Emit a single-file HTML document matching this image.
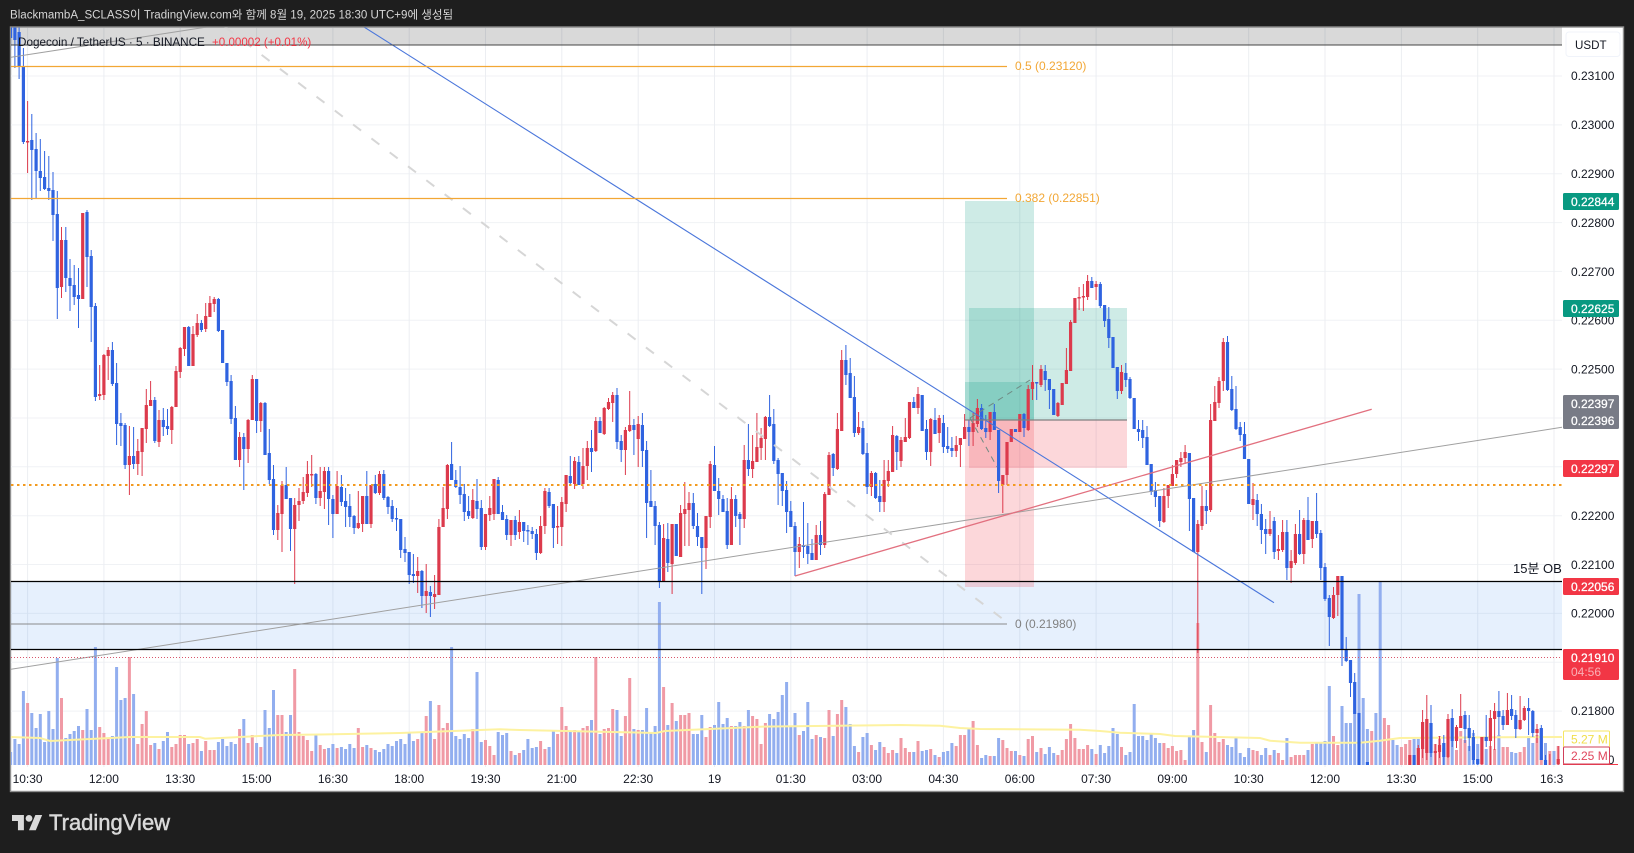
<!DOCTYPE html>
<html lang="ko"><head><meta charset="utf-8"><title>Dogecoin / TetherUS chart</title>
<style>
html,body{margin:0;padding:0;background:#1e1e1e;width:1634px;height:853px;overflow:hidden}
svg{display:block;font-family:"Liberation Sans","Noto Sans CJK KR",sans-serif}
.p{font-size:12px;fill:#131722}
.t{font-size:12px;fill:#131722;text-anchor:middle}
.w{font-size:12px;fill:#fff;stroke:#fff;stroke-width:.25}
path{fill:none}
</style></head><body>
<svg width="1634" height="853" viewBox="0 0 1634 853" xmlns="http://www.w3.org/2000/svg">
<defs><clipPath id="c"><rect x="11" y="27.5" width="1551" height="738"/></clipPath></defs>
<rect width="1634" height="853" fill="#1e1e1e"/>
<text x="10" y="18.5" font-size="11.55" fill="#d6d6d6">BlackmambA_SCLASS이 TradingView.com와 함께 8월 19, 2025 18:30 UTC+9에 생성됨</text>
<rect x="10.5" y="27" width="1613" height="764.5" fill="#fff" stroke="#8f8f8f" stroke-width="1.4"/>
<!-- grid -->
<path stroke="#f0f2f5" d="M11 76H1562M11 124.9H1562M11 173.7H1562M11 222.6H1562M11 271.4H1562M11 320.3H1562M11 369.1H1562M11 418H1562M11 466.8H1562M11 515.7H1562M11 564.5H1562M11 613.4H1562M11 662.2H1562M11 711.1H1562"/>
<path stroke="#eceef2" d="M27.6 28V767M103.9 28V767M180.2 28V767M256.6 28V767M332.9 28V767M409.2 28V767M485.5 28V767M561.8 28V767M638.2 28V767M714.5 28V767M790.8 28V767M867.1 28V767M943.4 28V767M1019.8 28V767M1096.1 28V767M1172.4 28V767M1248.7 28V767M1325 28V767M1401.4 28V767M1477.7 28V767M1554 28V767"/>
<!-- zones -->
<rect x="11" y="27.5" width="1551" height="17.5" fill="#000" fill-opacity=".15"/>
<rect x="11" y="581.5" width="1551" height="68" fill="#2f86f0" fill-opacity=".12"/>
<rect x="965" y="201" width="69" height="219" fill="#089981" fill-opacity=".2"/>
<rect x="965" y="420" width="69" height="167" fill="#f23645" fill-opacity=".2"/>
<rect x="969" y="308" width="158" height="112" fill="#089981" fill-opacity=".2"/>
<rect x="969" y="420" width="158" height="48" fill="#f23645" fill-opacity=".2"/>
<rect x="965" y="382" width="69" height="38" fill="#089981" fill-opacity=".2"/>
<g clip-path="url(#c)">
<!-- volume blue -->
<path stroke="#92aeef" stroke-width="3" d="M10.6 752V765M14.9 739V765M19.1 744V765M23.4 691V765M31.8 713V765M36.1 728V765M40.3 714V765M44.6 742V765M48.8 711V765M53 729V765M57.3 658V765M65.8 738V765M70 734V765M74.2 731V765M78.5 726V765M87 709V765M91.2 730V765M95.4 647V765M112.4 736V765M116.6 667V765M120.9 700V765M125.1 698V765M133.6 694V765M154.8 743V765M163.3 741V765M167.5 732V765M188.7 744V765M201.4 751V765M218.4 742V765M222.6 739V765M226.9 746V765M231.1 742V765M235.4 744V765M243.8 719V765M256.6 743V765M265 710V765M269.3 728V765M273.5 690V765M286.2 732V765M290.5 715V765M315.9 735V765M328.6 748V765M332.9 744V765M341.4 747V765M345.6 749V765M349.8 744V765M354.1 748V765M366.8 745V765M375.3 750V765M379.5 752V765M383.8 749V765M388 744V765M392.2 746V765M396.5 741V765M400.7 739V765M405 744V765M409.2 732V765M413.4 741V765M422 732V765M430.4 701V765M451.6 647V765M455.8 736V765M460 739V765M464.3 734V765M468.6 738V765M477 672V765M481.3 742V765M498.2 732V765M502.5 735V765M506.7 733V765M515.2 755V765M523.7 750V765M527.9 739V765M532.2 748V765M536.4 747V765M549.1 747V765M553.4 730V765M570.3 731V765M578.8 732V765M591.5 720V765M600 734V765M617 710V765M621.2 736V765M633.9 729V765M642.4 730V765M646.6 708V765M650.9 732V765M655.1 726V765M659.4 602V765M667.8 725V765M676.3 721V765M693.3 734V765M697.5 734V765M701.8 715V765M714.5 725V765M718.7 702V765M723 724V765M727.2 718V765M735.7 726V765M739.9 722V765M748.4 710V765M769.6 714V765M773.8 719V765M778.1 712V765M782.3 695V765M786.6 682V765M790.8 726V765M795 713V765M803.5 731V765M807.8 702V765M812 739V765M820.5 737V765M833.2 736V765M845.9 707V765M850.2 724V765M854.4 746V765M862.9 737V765M867.1 733V765M875.6 750V765M879.8 742V765M896.8 753V765M913.8 752V765M922.2 751V765M926.5 750V765M935 755V765M943.4 752V765M947.7 751V765M951.9 743V765M968.9 729V765M981.6 758V765M985.8 755V765M994.3 756V765M998.6 738V765M1015.5 751V765M1024 756V765M1036.7 752V765M1045.2 754V765M1049.4 747V765M1053.7 753V765M1091.8 749V765M1100.3 745V765M1104.6 753V765M1108.8 746V765M1113 728V765M1117.3 734V765M1125.8 755V765M1130 752V765M1134.2 704V765M1138.5 736V765M1142.7 736V765M1147 740V765M1151.2 733V765M1155.4 738V765M1159.7 743V765M1189.4 737V765M1193.6 730V765M1206.3 752V765M1227.5 745V765M1231.8 747V765M1236 738V765M1240.2 753V765M1244.5 757V765M1248.7 748V765M1261.4 755V765M1265.7 748V765M1274.2 750V765M1286.9 738V765M1308 750V765M1316.6 743V765M1320.8 743V765M1325 741V765M1329.3 686V765M1342 706V765M1346.2 723V765M1350.5 723V765M1354.7 714V765M1359 594V765M1363.2 698V765M1367.4 729V765M1375.9 713V765M1380.2 582V765M1392.9 740V765M1397.1 745V765M1414.1 739V765M1418.3 739V765M1431 743V765M1443.8 748V765M1452.2 741V765M1469.2 746V765M1473.4 733V765M1477.7 744V765M1486.2 749V765M1498.9 735V765M1511.6 752V765M1515.8 753V765M1528.6 736V765M1532.8 743V765M1545.5 743V765M1554 751V765"/>
<!-- volume red -->
<path stroke="#f09aa5" stroke-width="3" d="M27.6 703V765M61.5 698V765M82.7 730V765M99.7 727V765M103.9 733V765M108.2 739V765M129.4 657V765M137.8 744V765M142.1 724V765M146.3 711V765M150.6 745V765M159 749V765M171.8 747V765M176 744V765M180.2 735V765M184.5 735V765M193 743V765M197.2 739V765M205.7 741V765M209.9 750V765M214.2 750V765M239.6 729V765M248.1 743V765M252.3 735V765M260.8 747V765M277.8 715V765M282 715V765M294.7 669V765M299 732V765M303.2 736V765M307.4 740V765M311.7 751V765M320.2 745V765M324.4 749V765M337.1 748V765M358.3 728V765M362.6 747V765M371 748V765M417.7 739V765M426.2 716V765M434.6 739V765M438.9 705V765M443.1 728V765M447.4 723V765M472.8 729V765M485.5 740V765M489.8 746V765M494 755V765M511 751V765M519.4 753V765M540.6 741V765M544.9 749V765M557.6 734V765M561.8 707V765M566.1 726V765M574.6 730V765M583 728V765M587.3 726V765M595.8 657V765M604.2 729V765M608.5 728V765M612.7 709V765M625.4 716V765M629.7 678V765M638.2 730V765M663.6 687V765M672.1 703V765M680.6 715V765M684.8 715V765M689 713V765M706 737V765M710.2 727V765M731.4 726V765M744.2 726V765M752.6 716V765M756.9 719V765M761.1 744V765M765.4 723V765M799.3 735V765M816.2 735V765M824.7 738V765M829 710V765M837.4 714V765M841.7 700V765M858.6 752V765M871.4 745V765M884.1 747V765M888.3 753V765M892.6 750V765M901 738V765M905.3 748V765M909.5 752V765M918 741V765M930.7 749V765M939.2 757V765M956.2 746V765M960.4 735V765M964.6 735V765M973.1 721V765M977.4 745V765M990.1 756V765M1002.8 740V765M1007 748V765M1011.3 751V765M1019.8 755V765M1028.2 739V765M1032.5 736V765M1041 748V765M1057.9 755V765M1062.2 750V765M1066.4 739V765M1070.6 724V765M1074.9 738V765M1079.1 749V765M1083.4 749V765M1087.6 745V765M1096.1 754V765M1121.5 747V765M1163.9 743V765M1168.2 748V765M1172.4 746V765M1176.6 751V765M1180.9 750V765M1185.1 760V765M1197.8 623V765M1202 742V765M1210.6 705V765M1214.8 733V765M1219 742V765M1223.3 739V765M1253 750V765M1257.2 751V765M1270 755V765M1278.4 753V765M1282.6 760V765M1291.1 757V765M1295.4 755V765M1299.6 755V765M1303.8 755V765M1312.3 744V765M1333.5 736V765M1337.8 745V765M1371.7 731V765M1384.4 718V765M1388.6 725V765M1401.4 747V765M1405.6 744V765M1409.8 740V765M1422.6 740V765M1426.8 719V765M1435.3 744V765M1439.5 736V765M1448 737V765M1456.5 750V765M1460.7 731V765M1465 740V765M1481.9 737V765M1490.4 746V765M1494.6 749V765M1503.1 747V765M1507.4 747V765M1520.1 752V765M1524.3 747V765M1537 735V765M1541.3 729V765M1549.8 751V765M1558.2 746V765"/>
<!-- vol MA -->
<path stroke="#fdf2a0" stroke-width="2" d="M11 737L40 738L50 741L130 737L200 737L205 738.7L280 735L320 734.5L400 733L500 729.3L520 730L600 731.7L656 733L665 731L760 726.7L900 725L940 725.7L960 728L980 729L1080 729.7L1100 731L1120 732.7L1160 734L1175 736L1260 738L1270 740.7L1300 742.7L1360 742.7L1380 740.7L1400 738L1500 737.3L1562 737"/>
<!-- wicks blue -->
<path stroke="#2f63e0" stroke-width="1" d="M10.6 27V50M14.9 27V68M19.1 27V79M23.4 48V144M31.8 114V200M36.1 133V199M40.3 139V191M44.6 151V190M48.8 156V200M53 172V241M57.3 191V319M65.8 227V292M70 259V311M74.2 265V305M78.5 268V328M87 210V287M91.2 250V342M95.4 303V401M112.4 342V386M116.6 363V445M120.9 413V446M125.1 423V469M133.6 427V469M154.8 397V443M163.3 408V436M167.5 409V435M188.7 326V366M201.4 320V332M218.4 298V332M222.6 330V363M226.9 363V386M231.1 375V424M235.4 406V460M243.8 433V490M256.6 379V433M265 402V455M269.3 429V484M273.5 465V535M286.2 467V499M290.5 498V551M315.9 473V504M328.6 467V525M332.9 495V538M341.4 475V506M345.6 488V527M349.8 494V527M354.1 515V534M366.8 471V524M375.3 475V494M383.8 470V500M388 496V514M392.2 500V522M396.5 508V531M400.7 519V558M405 537V562M409.2 552V584M413.4 554V583M421.9 570V608M430.4 586V617M451.6 442V480M455.8 470V488M460.1 466V504M464.3 484V521M468.6 496V519M477 479V519M481.3 500V550M498.2 477V514M502.5 505V520M506.7 515V540M515.2 516V540M523.7 522V542M527.9 525V545M532.2 527V539M536.4 529V560M549.1 488V508M553.4 504V548M570.3 456V484M578.8 456V485M591.5 430V472M600 417V433M617 388V449M621.2 435V462M633.9 419V455M642.4 413V467M646.6 441V538M650.9 470V507M655.1 501V545M659.4 522V588M667.8 523V572M676.3 524V556M693.3 493V529M697.5 513V546M701.8 537V594M714.5 446V491M718.7 478V515M723 495V512M727.2 498V549M735.7 495V527M739.9 512V545M748.4 424V476M769.6 395V427M773.8 409V464M778.1 458V505M782.3 473V506M786.6 481V533M790.8 501V527M795 522V576M803.5 502V558M807.8 523V564M812 539V560M820.5 521V555M833.2 453V476M845.9 345V385M850.2 358V398M854.4 376V437M862.9 421V455M867.1 443V494M875.6 472V499M879.8 480V512M896.8 435V470M913.8 397V408M922.2 395V431M926.5 420V460M935 408V434M943.4 415V453M947.7 427V453M951.9 437V457M968.9 420V446M981.6 404V430M985.8 415V438M994.3 404V430M998.6 430V493M1015.5 429V432M1024 413V437M1036.7 382V400M1045.2 365V391M1049.4 379V409M1053.7 389V415M1091.8 277V288M1100.3 282V308M1104.6 305V327M1108.8 307V348M1113 337V368M1117.3 367V399M1125.8 363V387M1130 377V399M1134.2 398V429M1138.5 420V441M1142.7 420V448M1147 426V465M1151.2 464V495M1155.4 482V507M1159.7 496V527M1189.4 453V531M1193.6 498V552M1206.3 490V524M1227.5 336V391M1231.8 376V411M1236 386V430M1240.2 422V441M1244.5 422V459M1248.7 459V504M1257.2 494V526M1261.4 504V544M1265.7 519V554M1274.2 517V559M1286.9 520V580M1299.6 510V555M1308 497V540M1316.6 493V538M1320.8 530V580M1325 563V601M1329.3 595V646M1342 576V666M1346.2 637V662M1350.5 660V697M1354.7 673V714M1359 713V765M1367.4 762V765M1414.1 755V765M1431 705V757M1443.8 735V765M1452.2 709V747M1465 711V743M1469.2 715V751M1473.4 730V764M1477.7 759V765M1486.2 715V747M1498.9 691V735M1503.1 710V730M1511.6 695V720M1515.8 710V738M1528.6 698V735M1532.8 710V737M1541.3 725V760M1545.5 755V765"/>
<!-- bodies blue -->
<path stroke="#2f63e0" stroke-width="3.2" d="M10.6 27V38M14.9 27V40M19.1 32V67M23.4 67V142M31.8 140V150M36.1 149V171M40.3 171V178M44.6 177V189M48.8 188V191M53 190V215M57.3 214V288M65.8 240V278M70 278V286M74.2 285V297M78.5 295V299M87 212V257M91.2 256V307M95.4 306V397M112.4 350V384M116.6 383V424M120.9 423V426M125.1 425V465M133.6 456V464M154.8 400V441M163.3 420V427M167.5 426V429M188.7 327V366M201.4 323V330M218.4 299V331M222.6 330V363M226.9 363V382M231.1 381V419M235.4 418V460M243.8 437V449M256.6 379V421M265 403V455M269.3 453V480M273.5 479V530M286.2 485V499M290.5 498V529M315.9 474V498M328.6 471V499M332.9 499V514M341.4 487V502M345.6 501V507M349.8 506V517M354.1 516V528M366.8 496V524M375.3 484V493M383.8 474V498M388 497V507M392.2 506V519M396.5 518V519.5M400.7 519V550M405 549V553M409.2 552V575M413.4 574V576M421.9 571V596M430.4 592V596M451.6 464V480M455.8 480V487M460.1 487V495M464.3 494V512M468.6 511V516M477 501V509M481.3 508V547M498.2 480V514M502.5 512V520M506.7 519V535M515.2 520V535M523.7 522V531M527.9 530V531.5M532.2 531V534M536.4 534V553M549.1 492V506M553.4 504V528M570.3 476V483M578.8 462V485M591.5 448V452M600 421V433M617 395V442M621.2 441V450M633.9 425V430M642.4 425V451M646.6 450V503M650.9 501V507M655.1 506V526M659.4 525V582M667.8 539V563M676.3 524V556M693.3 503V526M697.5 526V537M701.8 537V548M714.5 465V491M718.7 491V499M723 499V512M727.2 511V545M735.7 499V516M739.9 514V519M748.4 460V469M769.6 417V426M773.8 424V461M778.1 460V474M782.3 473V491M786.6 490V512M790.8 511V527M795 526V552M803.5 545V547M807.8 546V554M812 553V560M820.5 535V545M833.2 454V468M845.9 360V375M850.2 373V398M854.4 397V433M862.9 428V454M867.1 453V487M875.6 473V498M879.8 496V502M896.8 436V452M913.8 402V408M922.2 395V431M926.5 429V452M935 420V434M943.4 423V447M947.7 446V449M951.9 448V451M968.9 427V432M981.6 408V429M985.8 428V432M994.3 412V430M998.6 430V481M1015.5 429V432M1024 414V428M1036.7 382V383.5M1045.2 371V380M1049.4 379V390M1053.7 389V415M1091.8 281V288M1100.3 284V306M1104.6 305V321M1108.8 319V338M1113 337V368M1117.3 367V391M1125.8 373V380M1130 379V398M1134.2 398V429M1138.5 429V432M1142.7 430V438M1147 437V465M1151.2 464V492M1155.4 490V497M1159.7 496V521M1189.4 453V499M1193.6 498V552M1206.3 506V511M1227.5 342V390M1231.8 389V410M1236 409V429M1240.2 427V435M1244.5 434V459M1248.7 459V504M1257.2 500V514M1261.4 514V530M1265.7 529V534M1274.2 521V552M1286.9 532V568M1299.6 534V554M1308 520V540M1316.6 521V534M1320.8 533V568M1325 567V599M1329.3 598V617M1342 576V650M1346.2 649V661M1350.5 660V683M1354.7 682V714M1359 713V765M1367.4 762V765M1414.1 755V765M1431 723V753M1443.8 743V757M1452.2 718V741M1465 715V729M1469.2 728V738M1473.4 737V760M1477.7 759V764M1486.2 737V741M1498.9 711V717M1503.1 716V725M1511.6 709V716M1515.8 715V729M1528.6 708V711M1532.8 711V733M1541.3 728V760M1545.5 760V765"/>
<!-- wicks red -->
<path stroke="#dc3a4c" stroke-width="1" d="M27.6 101V173M61.5 227V298M82.7 213V299M99.7 365V400M103.9 354V400M108.2 347V380M129.4 426V495M137.8 439V475M142.1 428V476M146.3 389V443M150.6 381V406M159 410V447M171.8 406V444M176 366V407M180.2 347V378M184.5 327V356M193 326V366M197.2 314V337M205.7 303V332M209.9 296V317M214.2 297V312M239.6 432V467M248.1 419V463M252.3 375V420M260.8 402V432M277.8 505V540M282 481V552M294.7 498V584M299 488V521M303.2 477V504M307.4 461V497M311.7 455V487M320.2 467V506M324.4 467V509M337.1 471V514M358.3 491V529M362.6 496V532M371 485V528M379.5 471V495M417.7 557V593M426.2 564V613M434.6 575V609M438.9 519V595M443.1 487V527M447.4 464V519M472.8 489V519M485.5 514V550M489.8 496V521M494 479V520M511 520V546M519.4 510V539M540.6 516V554M544.9 488V534M557.6 506V544M561.8 497V546M566.1 475V512M574.6 457V489M583 448V489M587.3 441V480M595.8 417V452M604.2 407V435M608.5 398V410M612.7 392V422M625.4 427V475M629.7 391V432M638.2 416V467M663.6 524V582M672.1 524V594M680.6 505V557M684.8 482V546M689 492V546M706 516V569M710.2 461V528M731.4 487V545M744.2 445V528M752.6 435V478M756.9 413V462M761.1 428V460M765.4 416V460M799.3 537V568M816.2 525V560M824.7 492V548M829 452V495M837.4 413V470M841.7 350V431M858.6 412V435M871.4 471V496M884.1 460V512M888.3 460V487M892.6 426V472M901 437V467M905.3 418V442M909.5 402V439M918 387V414M930.7 418V466M939.2 415V443M956.2 436V457M960.4 438V467M964.6 414V439M973.1 413V446M977.4 399V427M990.1 412V440M1002.8 475V513M1007 442V485M1011.3 429V442M1019.8 414V432M1028.2 385V431M1032.5 365V400M1041 365V387M1057.9 402V417M1062.2 383V405M1066.4 348V384M1070.6 320V371M1074.9 298V323M1079.1 287V310M1083.4 284V311M1087.6 275V300M1096.1 281V300M1121.5 365V394M1163.9 488V523M1168.2 485V508M1172.4 465V486M1176.6 460V478M1180.9 452V467M1185.1 445V464M1197.8 520V653M1202 486V530M1210.6 404V512M1214.8 386V421M1219 377V408M1223.3 338V391M1253 483V520M1270 511V536M1278.4 535V560M1282.6 520V552M1291.1 550V583M1295.4 524V565M1303.8 518V564M1312.3 521V548M1333.5 587V619M1337.8 576V616M1409.8 755V765M1418.3 745V765M1422.6 710V758M1426.8 695V760M1435.3 744V765M1439.5 736V758M1448 714V758M1456.5 725V748M1460.7 694V728M1481.9 737V765M1490.4 710V765M1494.6 703V750M1507.4 693V725M1520.1 696V730M1524.3 706V721M1537 724V743M1549.8 754V765M1558.2 746V765"/>
<!-- bodies red -->
<path stroke="#dc3a4c" stroke-width="3.2" d="M27.6 141V142.5M61.5 240V287M82.7 213V299M99.7 394V396M103.9 355V395M108.2 350V356M129.4 456V465M137.8 451V464M142.1 428V452M146.3 405V429M150.6 400V406M159 420V442M171.8 407V430M176 371V407M180.2 348V372M184.5 327V349M193 334V366M197.2 323V335M205.7 316V329M209.9 303V317M214.2 299V304M239.6 437V460M248.1 420V449M252.3 379V420M260.8 403V421M277.8 513V530M282 485V514M294.7 505V529M299 501V505M303.2 492V501M307.4 474V493M311.7 474V475.5M320.2 491V498M324.4 471V492M337.1 486V514M358.3 523V528M362.6 496V524M371 485V524M379.5 474V493M417.7 571V576M426.2 591V596M434.6 594V597M438.9 527V595M443.1 508V527M447.4 465V509M472.8 500V518M485.5 514V547M489.8 508V515M494 479V514M511 520V535M519.4 522V532M540.6 526V553M544.9 491V526M557.6 526V527.5M561.8 502V527M566.1 475V504M574.6 461V484M583 466V484M587.3 448V466M595.8 421V451M604.2 408V434M608.5 402V409M612.7 395V403M625.4 430V450M629.7 425V431M638.2 424V439M663.6 538V582M672.1 524V564M680.6 513V557M684.8 509V514M689 503V510M706 516V548M710.2 464V517M731.4 499V545M744.2 460V519M752.6 461V469M756.9 447V462M761.1 438V448M765.4 417V439M799.3 544V552M816.2 535V560M824.7 494V545M829 455V495M837.4 429V469M841.7 360V431M858.6 427V433M871.4 473V487M884.1 480V502M888.3 471V481M892.6 435V472M901 440V461M905.3 437V442M909.5 402V438M918 394V408M930.7 419V452M939.2 418V433M956.2 445V451M960.4 438V445M964.6 427V439M973.1 423V432M977.4 408V424M990.1 412V432M1002.8 475V485M1007 442V475M1011.3 429V442M1019.8 414V432M1028.2 389V430M1032.5 382V389M1041 369V385M1057.9 403V416M1062.2 383V405M1066.4 370V384M1070.6 322V371M1074.9 298V323M1079.1 297V298.5M1083.4 296V297.5M1087.6 281V297M1096.1 284V287M1121.5 372V391M1163.9 496V522M1168.2 485V496M1172.4 474V486M1176.6 460V474M1180.9 458V462M1185.1 452V458M1197.8 524V552M1202 506V526M1210.6 420V510M1214.8 402V421M1219 381V403M1223.3 342V381M1253 499V505M1270 529V534M1278.4 549V551M1282.6 532V550M1291.1 561V568M1295.4 534V563M1303.8 520V554M1312.3 521V539M1333.5 595V618M1337.8 576V595M1409.8 755V765M1418.3 748V765M1422.6 722V749M1426.8 719V753M1435.3 751V753M1439.5 745V752M1448 719V757M1456.5 727V741M1460.7 716V728M1481.9 737V764M1490.4 718V741M1494.6 711V719M1507.4 710V725M1520.1 720V729M1524.3 708V720M1537 729V733M1558.2 759V764"/>
</g>
<g clip-path="url(#c)">
<path stroke="#a0a0a0" d="M10.5 57.3L207 27M10.5 669.3L1562 427.3"/>
<path stroke="#d6d6d6" stroke-width="2" stroke-dasharray="10 13" d="M225 27L1008 623"/>
<path stroke="#4a76db" stroke-width="1.1" d="M364 27L1274 602.7"/>
<path stroke="#e2707f" stroke-width="1.3" d="M795 576L1371.7 409.3"/>
<path stroke="#f2a735" stroke-width="1.2" d="M11 66.5H1007M11 198.5H1007"/>
<path stroke="#8a8a8a" stroke-width="1" d="M11 624H1007"/>
<path stroke="#f29a1f" stroke-width="2" stroke-dasharray="2.5 3.5" d="M11 485H1562"/>
<path stroke="#000" stroke-width="1.2" d="M11 581.5H1562M11 649.5H1562"/>
<path stroke="#444" stroke-width="1" d="M11 45H1562"/>
<path stroke="#d9566a" stroke-width="1" stroke-dasharray="1 2" d="M11 657.5H1562"/>
<path stroke="#808080" stroke-width="1.2" d="M965 420H1127"/>
<path stroke="#6f8a84" stroke-width="1" stroke-dasharray="6 5" d="M970 418L1030 380M970 418L997 467"/>
</g>
<!-- legend and fib labels -->
<text x="18" y="46" font-size="11.7" fill="#131722">Dogecoin / TetherUS · 5 · BINANCE</text>
<text x="212" y="46" font-size="11.6" fill="#f23645">+0.00002 (+0.01%)</text>
<text x="1015" y="70" font-size="12" fill="#f2a735">0.5 (0.23120)</text>
<text x="1015" y="202" font-size="12" fill="#f2a735">0.382 (0.22851)</text>
<text x="1015" y="628" font-size="12" fill="#808080">0 (0.21980)</text>
<text x="1513" y="573" font-size="13" fill="#131722">15분 OB</text>
<!-- price axis -->
<rect x="1566" y="32" width="54" height="24.5" rx="3" fill="#fff" stroke="#f0f3fa"/>
<text x="1575" y="49" font-size="11.6" fill="#131722">USDT</text>
<g>
<text class="p" x="1571" y="80">0.23100</text>
<text class="p" x="1571" y="129">0.23000</text>
<text class="p" x="1571" y="178">0.22900</text>
<text class="p" x="1571" y="227">0.22800</text>
<text class="p" x="1571" y="276">0.22700</text>
<text class="p" x="1571" y="324.5">0.22600</text>
<text class="p" x="1571" y="373.5">0.22500</text>
<text class="p" x="1571" y="520">0.22200</text>
<text class="p" x="1571" y="569">0.22100</text>
<text class="p" x="1571" y="617.5">0.22000</text>
<text class="p" x="1571" y="715">0.21800</text>
<text class="p" x="1571" y="764">0.21700</text>
</g>
<rect x="1563" y="193" width="56" height="17" rx="1.5" fill="#089981"/><text class="w" x="1571" y="206">0.22844</text>
<rect x="1563" y="300" width="56" height="17" rx="1.5" fill="#089981"/><text class="w" x="1571" y="313">0.22625</text>
<rect x="1563" y="395" width="56" height="34" rx="1.5" fill="#787b86"/><text class="w" x="1571" y="408">0.22397</text><text class="w" x="1571" y="425">0.22396</text>
<rect x="1563" y="460" width="56" height="17" rx="1.5" fill="#f23645"/><text class="w" x="1571" y="473">0.22297</text>
<rect x="1563" y="578" width="56" height="17" rx="1.5" fill="#f23645"/><text class="w" x="1571" y="591">0.22056</text>
<rect x="1563" y="649" width="56" height="31" rx="1.5" fill="#f23645"/><text class="w" x="1571" y="662">0.21910</text><text x="1571" y="676" font-size="12" fill="#ffffff" fill-opacity=".6">04:56</text>
<path stroke="#f23645" d="M1563 764.5H1618"/>
<rect x="1563.5" y="731" width="46" height="16" rx="1" fill="#fff" stroke="#f5e663"/><text x="1571" y="743.5" font-size="12" fill="#f0de4a">5.27 M</text>
<rect x="1563.5" y="747" width="46" height="17" rx="1" fill="#fff" stroke="#d0405a"/><text x="1571" y="760" font-size="12" fill="#e0455c">2.25 M</text>
<!-- time axis -->
<text class="t" x="27.6" y="783">10:30</text><text class="t" x="103.9" y="783">12:00</text><text class="t" x="180.2" y="783">13:30</text><text class="t" x="256.6" y="783">15:00</text><text class="t" x="332.9" y="783">16:30</text><text class="t" x="409.2" y="783">18:00</text><text class="t" x="485.5" y="783">19:30</text><text class="t" x="561.8" y="783">21:00</text><text class="t" x="638.2" y="783">22:30</text><text class="t" x="714.5" y="783">19</text><text class="t" x="790.8" y="783">01:30</text><text class="t" x="867.1" y="783">03:00</text><text class="t" x="943.4" y="783">04:30</text><text class="t" x="1019.8" y="783">06:00</text><text class="t" x="1096.1" y="783">07:30</text><text class="t" x="1172.4" y="783">09:00</text><text class="t" x="1248.7" y="783">10:30</text><text class="t" x="1325" y="783">12:00</text><text class="t" x="1401.4" y="783">13:30</text><text class="t" x="1477.7" y="783">15:00</text>
<text x="1540" y="783" font-size="12" fill="#131722">16:3</text>
<!-- logo -->
<g transform="translate(12 811.6) scale(.85)" fill="#d9d9d9"><path style="fill:#d9d9d9" d="M14 22H7V11H0V4h14v18zM28 22h-8l7.5-18h8L28 22z"/><circle cx="20" cy="8" r="4"/></g>
<text x="49" y="830" font-size="22" fill="#d9d9d9" stroke="#d9d9d9" stroke-width=".5">TradingView</text>
</svg>
</body></html>
